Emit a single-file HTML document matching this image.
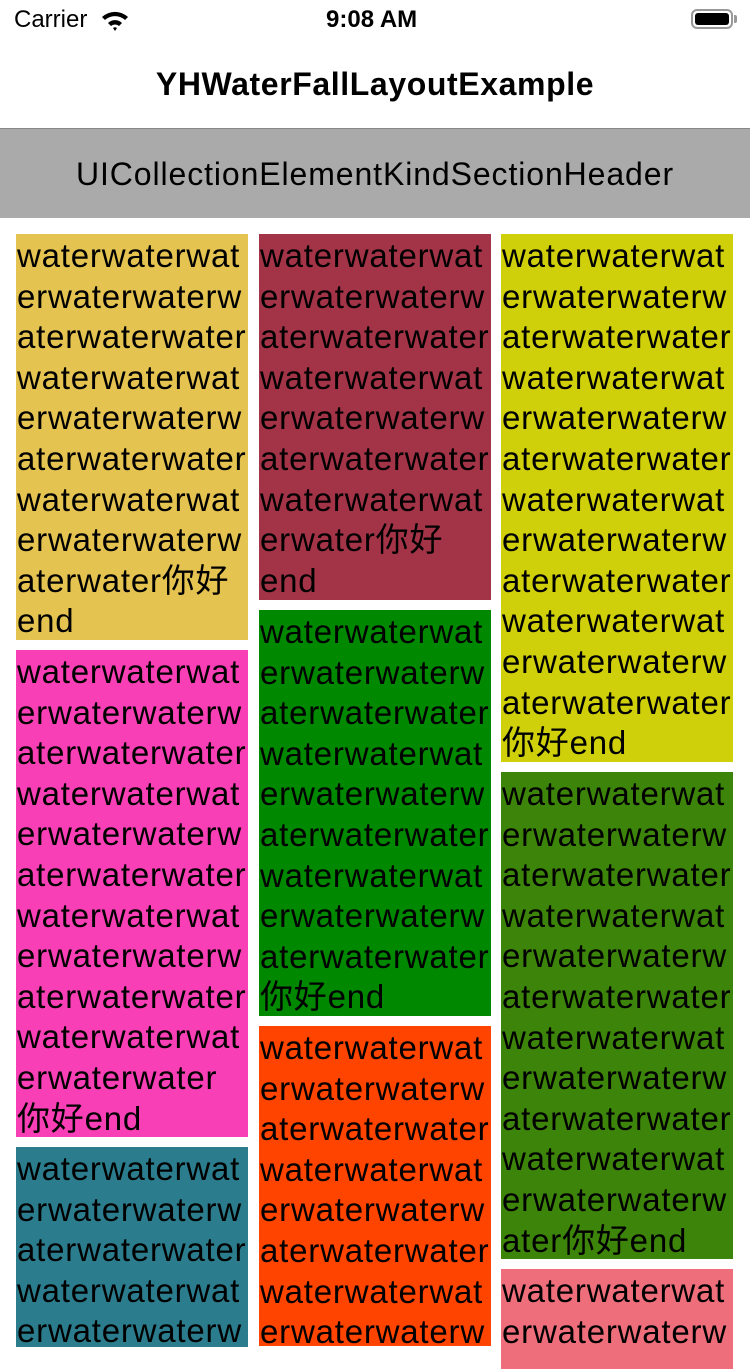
<!DOCTYPE html><html><head><meta charset="utf-8"><style>
body{margin:0;width:750px;height:1334px;overflow:hidden;background:#fff;font-family:"Liberation Sans","Noto Sans CJK SC",sans-serif;position:relative}
.sb{position:absolute;top:0;left:0;width:750px;height:40px;font-size:24px}
.nav{position:absolute;top:40px;left:0;width:750px;height:88px;text-align:center;line-height:88px;font-size:32px;font-weight:bold;letter-spacing:0.6px}
.hdr{position:absolute;top:128px;left:0;width:750px;height:90px;background:#aaaaaa;border-top:1px solid #888;box-sizing:border-box;text-align:center;line-height:90px;font-size:32px;letter-spacing:0.9px}
.c{position:absolute;width:232px;overflow:hidden;font-size:33px;line-height:40.6px;white-space:nowrap;color:#000;letter-spacing:0.8px;padding-top:2px;box-sizing:border-box}
.c div{height:40.6px;padding-left:1px}
</style></head><body>
<div class="sb"><span style="position:absolute;left:14px;top:6px">Carrier</span>
<svg style="position:absolute;left:100px;top:9px" width="30" height="22" viewBox="0 0 30 22"><path d="M2 8 A19 19 0 0 1 28 8 L25 11 A15 15 0 0 0 5 11Z M8 14 A10 10 0 0 1 22 14 L19 17 A6 6 0 0 0 11 17Z M13 19 L15 22 L17 19 A3 3 0 0 0 13 19Z" fill="#000"/></svg>
<span style="position:absolute;left:326px;top:6px;font-weight:bold">9:08 AM</span>
<div style="position:absolute;left:691px;top:9px;width:42px;height:20px;border:2px solid #999;border-radius:6px;box-sizing:border-box"><div style="margin:2px;height:12px;background:#000;border-radius:3px"></div></div>
<div style="position:absolute;left:734px;top:15px;width:3px;height:8px;background:#999;border-radius:0 2px 2px 0"></div></div>
<div class="nav">YHWaterFallLayoutExample</div>
<div class="hdr">UICollectionElementKindSectionHeader</div>

<div class="c" style="left:16px;top:234px;height:406px;background:#e4c350"><div>waterwaterwat</div><div>erwaterwaterw</div><div>aterwaterwater</div><div>waterwaterwat</div><div>erwaterwaterw</div><div>aterwaterwater</div><div>waterwaterwat</div><div>erwaterwaterw</div><div>aterwater你好</div><div>end</div></div>
<div class="c" style="left:16px;top:650px;height:487px;background:#f93fb6"><div>waterwaterwat</div><div>erwaterwaterw</div><div>aterwaterwater</div><div>waterwaterwat</div><div>erwaterwaterw</div><div>aterwaterwater</div><div>waterwaterwat</div><div>erwaterwaterw</div><div>aterwaterwater</div><div>waterwaterwat</div><div>erwaterwater</div><div>你好end</div></div>
<div class="c" style="left:16px;top:1147px;height:200px;background:#2b7d8e"><div>waterwaterwat</div><div>erwaterwaterw</div><div>aterwaterwater</div><div>waterwaterwat</div><div>erwaterwaterw</div></div>

<div class="c" style="left:259px;top:234px;height:366px;background:#a33347"><div>waterwaterwat</div><div>erwaterwaterw</div><div>aterwaterwater</div><div>waterwaterwat</div><div>erwaterwaterw</div><div>aterwaterwater</div><div>waterwaterwat</div><div>erwater你好</div><div>end</div></div>
<div class="c" style="left:259px;top:610px;height:406px;background:#008800"><div>waterwaterwat</div><div>erwaterwaterw</div><div>aterwaterwater</div><div>waterwaterwat</div><div>erwaterwaterw</div><div>aterwaterwater</div><div>waterwaterwat</div><div>erwaterwaterw</div><div>aterwaterwater</div><div>你好end</div></div>
<div class="c" style="left:259px;top:1026px;height:320px;background:#ff4400"><div>waterwaterwat</div><div>erwaterwaterw</div><div>aterwaterwater</div><div>waterwaterwat</div><div>erwaterwaterw</div><div>aterwaterwater</div><div>waterwaterwat</div><div>erwaterwaterw</div></div>

<div class="c" style="left:501px;top:234px;height:528px;background:#d0d00a"><div>waterwaterwat</div><div>erwaterwaterw</div><div>aterwaterwater</div><div>waterwaterwat</div><div>erwaterwaterw</div><div>aterwaterwater</div><div>waterwaterwat</div><div>erwaterwaterw</div><div>aterwaterwater</div><div>waterwaterwat</div><div>erwaterwaterw</div><div>aterwaterwater</div><div>你好end</div></div>
<div class="c" style="left:501px;top:772px;height:487px;background:#3d850a"><div>waterwaterwat</div><div>erwaterwaterw</div><div>aterwaterwater</div><div>waterwaterwat</div><div>erwaterwaterw</div><div>aterwaterwater</div><div>waterwaterwat</div><div>erwaterwaterw</div><div>aterwaterwater</div><div>waterwaterwat</div><div>erwaterwaterw</div><div>ater你好end</div></div>
<div class="c" style="left:501px;top:1269px;height:100px;background:#ee6e7b"><div>waterwaterwat</div><div>erwaterwaterw</div></div>
</body></html>
